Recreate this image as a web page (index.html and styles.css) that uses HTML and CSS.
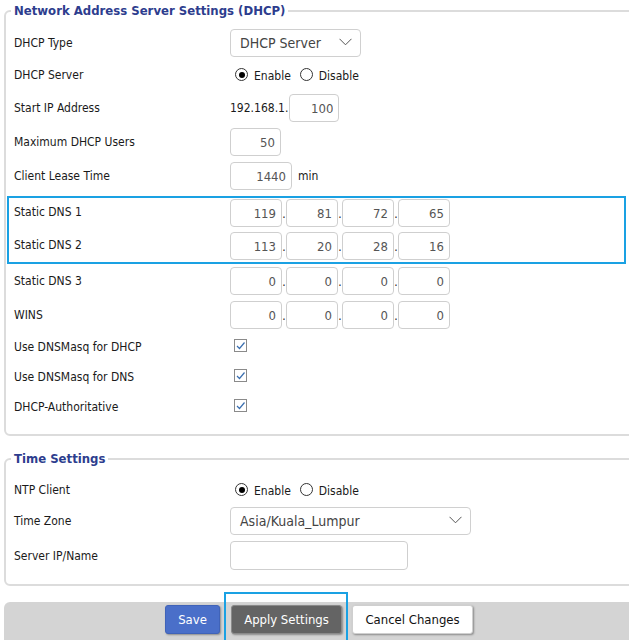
FILE: index.html
```html
<!DOCTYPE html>
<html>
<head>
<meta charset="utf-8">
<title>DHCP Settings</title>
<link rel="stylesheet" href="styles.css">
</head>
<body>
<div class="page">
  <fieldset class="fs fs-dhcp">
    <legend>Network Address Server Settings (DHCP)</legend>
    <div class="row r-sel">
      <span class="label">DHCP Type</span>
      <div class="select sel-type"><span>DHCP Server</span><svg class="chev" width="13" height="8" viewBox="0 0 13 8"><polyline points="0.5,0.8 6.5,6.8 12.5,0.8" fill="none" stroke="#555" stroke-width="1"/></svg></div>
    </div>
    <div class="row r-radio">
      <span class="label">DHCP Server</span>
      <label class="radio"><span class="dot on"></span>Enable</label>
      <label class="radio"><span class="dot"></span>Disable</label>
    </div>
    <div class="row r-input">
      <span class="label">Start IP Address</span>
      <span class="prefix">192.168.1.</span><input class="num w49" type="text" value="100">
    </div>
    <div class="row r-input">
      <span class="label">Maximum DHCP Users</span>
      <input class="num w51" type="text" value="50">
    </div>
    <div class="row r-input">
      <span class="label">Client Lease Time</span>
      <input class="num w62" type="text" value="1440"><span class="unit">min</span>
    </div>
    <div class="dnsbox">
      <div class="row r-dns1">
        <span class="label">Static DNS 1</span>
        <div class="ip"><input class="num oct" type="text" value="119"><span class="sep">.</span><input class="num oct" type="text" value="81"><span class="sep">.</span><input class="num oct" type="text" value="72"><span class="sep">.</span><input class="num oct" type="text" value="65"></div>
      </div>
      <div class="row r-dns2">
        <span class="label">Static DNS 2</span>
        <div class="ip"><input class="num oct" type="text" value="113"><span class="sep">.</span><input class="num oct" type="text" value="20"><span class="sep">.</span><input class="num oct" type="text" value="28"><span class="sep">.</span><input class="num oct" type="text" value="16"></div>
      </div>
    </div>
    <div class="row r-input">
      <span class="label">Static DNS 3</span>
      <div class="ip"><input class="num oct" type="text" value="0"><span class="sep">.</span><input class="num oct" type="text" value="0"><span class="sep">.</span><input class="num oct" type="text" value="0"><span class="sep">.</span><input class="num oct" type="text" value="0"></div>
    </div>
    <div class="row r-input">
      <span class="label">WINS</span>
      <div class="ip"><input class="num oct" type="text" value="0"><span class="sep">.</span><input class="num oct" type="text" value="0"><span class="sep">.</span><input class="num oct" type="text" value="0"><span class="sep">.</span><input class="num oct" type="text" value="0"></div>
    </div>
    <div class="row r-check">
      <span class="label">Use DNSMasq for DHCP</span>
      <span class="check"><svg width="11" height="11" viewBox="0 0 11 11"><polyline points="2,6 4.5,8.5 9.5,2.5" fill="none" stroke="#3b6fb0" stroke-width="1.2"/></svg></span>
    </div>
    <div class="row r-check">
      <span class="label">Use DNSMasq for DNS</span>
      <span class="check"><svg width="11" height="11" viewBox="0 0 11 11"><polyline points="2,6 4.5,8.5 9.5,2.5" fill="none" stroke="#3b6fb0" stroke-width="1.2"/></svg></span>
    </div>
    <div class="row r-check">
      <span class="label">DHCP-Authoritative</span>
      <span class="check"><svg width="11" height="11" viewBox="0 0 11 11"><polyline points="2,6 4.5,8.5 9.5,2.5" fill="none" stroke="#3b6fb0" stroke-width="1.2"/></svg></span>
    </div>
  </fieldset>

  <fieldset class="fs fs-time">
    <legend>Time Settings</legend>
    <div class="row r-radio2">
      <span class="label">NTP Client</span>
      <label class="radio"><span class="dot on"></span>Enable</label>
      <label class="radio"><span class="dot"></span>Disable</label>
    </div>
    <div class="row r-sel2">
      <span class="label">Time Zone</span>
      <div class="select sel-tz"><span>Asia/Kuala_Lumpur</span><svg class="chev" width="13" height="8" viewBox="0 0 13 8"><polyline points="0.5,0.8 6.5,6.8 12.5,0.8" fill="none" stroke="#555" stroke-width="1"/></svg></div>
    </div>
    <div class="row r-input2">
      <span class="label">Server IP/Name</span>
      <input class="txt" type="text" value="">
    </div>
  </fieldset>

  <div class="bar">
    <button class="btn save">Save</button>
    <button class="btn apply">Apply Settings</button>
    <button class="btn cancel">Cancel Changes</button>
    <span class="mark"></span>
  </div>
</div>
</body>
</html>
```

FILE: styles.css
```css
html, body {
  margin: 0;
  padding: 0;
  background: #fff;
  overflow: hidden;
}
body {
  font-family: "DejaVu Sans Condensed", "DejaVu Sans", sans-serif;
  font-size: 12px;
  color: #1a1a1a;
}
.page {
  width: 640px;
  height: 640px;
  position: relative;
}
.fs {
  margin: 3px 0 0 4px;
  border: 2px solid #dcdcdc;
  border-radius: 6px;
  padding: 0 0 0 8px;
}
.fs legend {
  font-weight: bold;
  font-size: 13px;
  line-height: 16px;
  color: #2d3d8e;
  padding: 0 3px;
  margin-left: -3px;
}
.fs-dhcp {
  padding-top: 8px;
  padding-bottom: 12px;
}
.fs-time {
  margin-top: 15px;
  padding-top: 8px;
  padding-bottom: 10px;
}
.row {
  display: flex;
  align-items: center;
}
.label {
  width: 216px;
  flex: none;
}
.r-sel { height: 32px; }
.r-radio { height: 32px; }
.r-input { height: 34px; }
.r-check { height: 30px; }
.r-radio2 { height: 30px; }
.r-sel2 { height: 32px; }
.r-input2 { height: 37px; }

.dnsbox {
  margin: 3px 0 0 -7px;
  padding-left: 5px;
  width: 619px;
  border: 2px solid #1aa1e3;
  box-sizing: border-box;
}
.r-dns1 { height: 31px; padding-top: 1px; box-sizing: border-box; align-items: flex-start; }
.r-dns1 .label { padding-top: 6px; }
.r-dns2 { height: 33px; padding-top: 3px; box-sizing: border-box; align-items: flex-start; }
.r-dns2 .label { padding-top: 6px; }

.select {
  box-sizing: border-box;
  height: 28px;
  border: 1px solid #d0d0d0;
  border-radius: 4px;
  display: flex;
  align-items: center;
  justify-content: space-between;
  padding: 0 8px 0 9px;
  font-family: "DejaVu Sans Condensed", "DejaVu Sans", sans-serif;
  font-size: 14px;
  color: #444;
}
.sel-type { width: 131px; height: 28px; }
.sel-tz { width: 241px; }
.chev { flex: none; margin-top: -2px; }

.radio {
  display: inline-flex;
  align-items: center;
  margin-left: 5px;
  margin-right: 4px;
  padding-top: 2px;
}
.dot {
  box-sizing: border-box;
  width: 13px;
  height: 13px;
  border: 1px solid #333;
  border-radius: 50%;
  margin-right: 6px;
  margin-top: -3px;
  position: relative;
  background: #fff;
}
.dot.on::after {
  content: "";
  position: absolute;
  left: 2.5px;
  top: 2.5px;
  width: 6px;
  height: 6px;
  border-radius: 50%;
  background: #000;
}

.prefix { margin-right: 1px; }
.unit { margin-left: 6px; }

.num, .txt {
  box-sizing: border-box;
  height: 28px;
  border: 1px solid #cfcfcf;
  border-radius: 4px;
  background: #fff;
  font-family: "DejaVu Sans Condensed", "DejaVu Sans", sans-serif;
  font-size: 13px;
  color: #555;
  text-align: right;
  padding: 0 5px 0 4px;
  margin: 0;
  outline: none;
}
.w49 { width: 50px; }
.w51 { width: 51px; }
.w62 { width: 62px; }
.txt { width: 178px; height: 29px; text-align: left; }

.ip {
  display: flex;
  align-items: baseline;
}
.oct { width: 52px; }
.sep {
  width: 4px;
  text-align: center;
  font-size: 12px;
}

.check {
  box-sizing: border-box;
  width: 13px;
  height: 13px;
  border: 1px solid #8a8a8a;
  margin-left: 4px;
  margin-top: -3px;
  display: inline-flex;
  align-items: center;
  justify-content: center;
  background: #fff;
}

.bar {
  margin: 16px 0 0 4px;
  height: 60px;
  background: #d4d4d4;
  border-radius: 6px 0 0 0;
  display: flex;
  justify-content: center;
  align-items: flex-start;
  padding: 3px 6px 0 0;
  box-sizing: border-box;
  gap: 10px;
  position: relative;
}
.btn {
  height: 29px;
  border-radius: 3px;
  font-family: "DejaVu Sans Condensed", "DejaVu Sans", sans-serif;
  font-size: 13px;
  padding: 0 10px;
  box-shadow: 1px 1px 2px rgba(0,0,0,0.35);
}
.save {
  width: 55px;
  background: #4a6fc9;
  border: 1px solid #4063b8;
  color: #fff;
  margin-right: 1px;
}
.apply {
  width: 111px;
  background: #646464;
  border: 1px solid #8a8a8a;
  color: #fff;
}
.cancel {
  width: 121px;
  background: #fff;
  border: 1px solid #cfcfcf;
  color: #111;
}
.mark {
  position: absolute;
  left: 220px;
  top: -10px;
  width: 124px;
  height: 60px;
  border: 2px solid #1aa1e3;
  box-sizing: border-box;
}
```
